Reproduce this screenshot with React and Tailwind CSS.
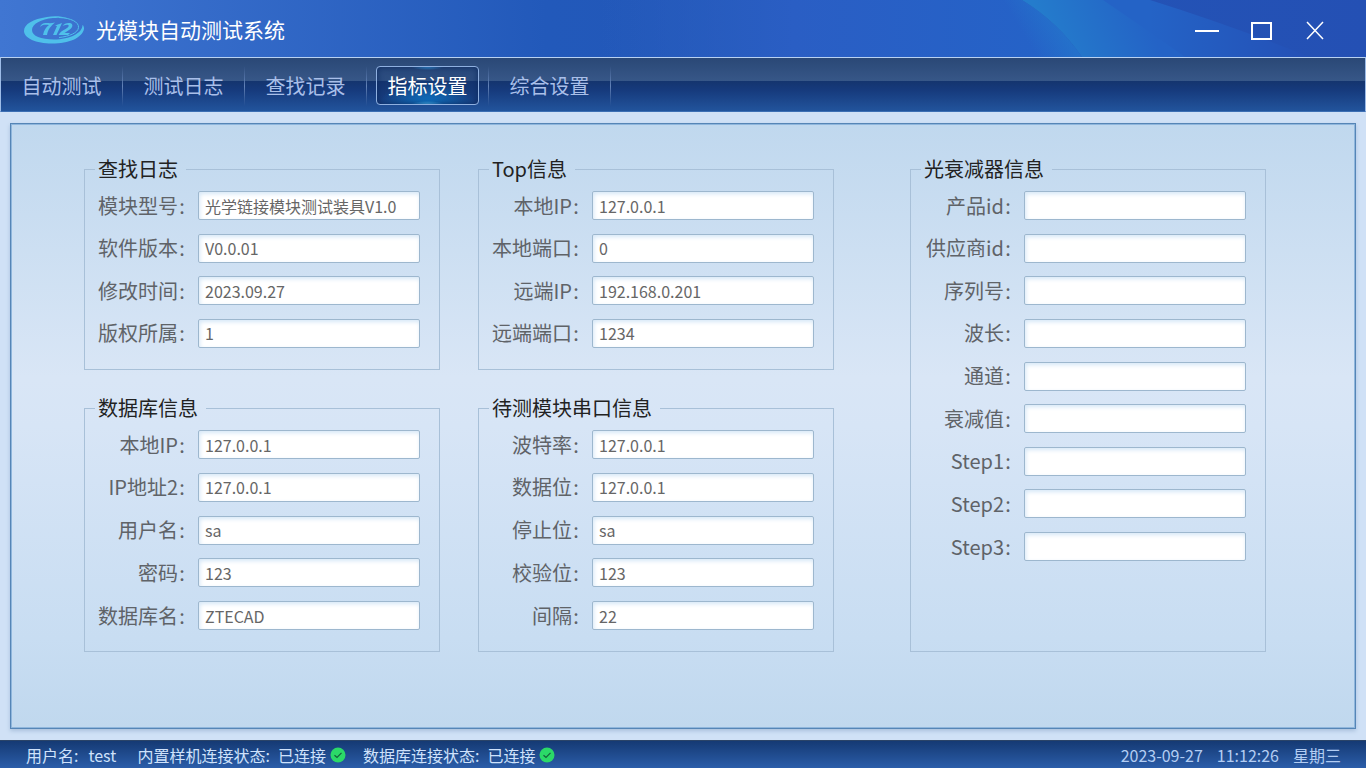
import { useId, useState } from 'react'

const TABS = ['自动测试', '测试日志', '查找记录', '指标设置', '综合设置']

const LOG = [
  ['模块型号', '光学链接模块测试装具V1.0'],
  ['软件版本', 'V0.0.01'],
  ['修改时间', '2023.09.27'],
  ['版权所属', '1'],
]

const DATABASE = [
  ['本地IP', '127.0.0.1'],
  ['IP地址2', '127.0.0.1'],
  ['用户名', 'sa'],
  ['密码', '123'],
  ['数据库名', 'ZTECAD'],
]

const TOP = [
  ['本地IP', '127.0.0.1'],
  ['本地端口', '0'],
  ['远端IP', '192.168.0.201'],
  ['远端端口', '1234'],
]

const SERIAL = [
  ['波特率', '127.0.0.1'],
  ['数据位', '127.0.0.1'],
  ['停止位', 'sa'],
  ['校验位', '123'],
  ['间隔', '22'],
]

const ATTENUATOR = [
  ['产品id', ''],
  ['供应商id', ''],
  ['序列号', ''],
  ['波长', ''],
  ['通道', ''],
  ['衰减值', ''],
  ['Step1', ''],
  ['Step2', ''],
  ['Step3', ''],
]

function Logo() {
  return (
    <svg viewBox="0 0 60 28" className="w-[60px] h-7 shrink-0" aria-hidden="true">
      <path
        fill="#4fc0ea"
        fillRule="evenodd"
        d="M43 2C37 0 29 0 23 1C9 3 0 8 0 15C0 22 12 27.5 28 27.5C45 27.5 58 22 60 13C60 11 59.5 9.500 58.5 9C58.5 17 46 23.5 30 23.5C17 23.5 8 20 8 14C8 8 17 3 29 2C36 1.500 40 1.500 43 2Z"
      />
      <path d="M35 1.5C47 2 55 6 54.5 11.5C54 17 45 20.5 35 21.500" fill="none" stroke="#4fc0ea" strokeWidth="1" />
      <path
        fill="#4fc0ea"
        d="M16 11C17 7.500 20 6.500 23 7C26 7.300 28 7.200 31 6.500C27 10 24 13 23 19H19C20 14 22 11 25 9C21 8.500 18 8.500 16 11Z"
      />
      <path fill="#4fc0ea" d="M31 9.500L38 7L32.500 19H29L33 10Z" />
      <path
        fill="#4fc0ea"
        d="M38.500 10C40 7.500 43 6.500 46 7C50 8 48.500 12 45 14L40.500 17H46L44 19H34.500C36 16 39 14.500 42 12.800C45 11 45.500 9 43.500 8.800C41.500 8.600 40 9.500 38.500 10Z"
      />
    </svg>
  )
}

function TitleBar() {
  return (
    <header className="relative h-[57px] flex items-center justify-between pl-6 pr-6 pt-0.5 overflow-hidden bg-linear-to-r from-[#4076d2] via-[#2259ba] via-40% to-[#2450b4]">
      <svg viewBox="0 0 1366 57" preserveAspectRatio="none" className="absolute inset-0 w-full h-full" aria-hidden="true">
        <defs>
          <linearGradient id="base" x1="0" x2="1" y1="0" y2="0">
            <stop offset="0" stopColor="#2b60c0" stopOpacity="0" />
            <stop offset="0.4" stopColor="#2a5ec4" />
            <stop offset="1" stopColor="#2463c8" />
          </linearGradient>
          <linearGradient id="edge" gradientUnits="userSpaceOnUse" x1="1028" y1="42" x2="1058" y2="24">
            <stop offset="0" stopColor="#2479cc" stopOpacity="0" />
            <stop offset="1" stopColor="#2479cc" stopOpacity="0.6" />
          </linearGradient>
          <linearGradient id="glow" gradientUnits="userSpaceOnUse" x1="1048" y1="38" x2="1140" y2="0">
            <stop offset="0" stopColor="#247ccc" />
            <stop offset="1" stopColor="#2463c6" />
          </linearGradient>
          <linearGradient id="tail" gradientUnits="userSpaceOnUse" x1="1150" y1="0" x2="1310" y2="0">
            <stop offset="0" stopColor="#2463c6" />
            <stop offset="1" stopColor="#2450b6" />
          </linearGradient>
        </defs>
        <path d="M600 0H1022Q1058 22 1082 57H600Z" fill="url(#base)" />
        <path d="M980 0H1022Q1058 22 1082 57H980Z" fill="url(#edge)" />
        <path d="M1150 0Q1230 25 1310 57H1140L1100 0Z" fill="url(#tail)" />
        <path d="M1022 0H1103Q1140 25 1185 57H1082Q1058 22 1022 0Z" fill="url(#glow)" />
      </svg>
      <div className="relative flex items-center gap-3">
        <Logo />
        <h1 className="text-[21px] leading-7 pb-0.5 text-white">光模块自动测试系统</h1>
      </div>
      <div className="relative flex items-center text-white">
        <button type="button" aria-label="最小化" className="w-[54px] h-8 flex items-center justify-center">
          <svg width="24" height="20" fill="none" stroke="currentColor" strokeWidth="2"><path d="M0 11H24" /></svg>
        </button>
        <button type="button" aria-label="最大化" className="w-[54px] h-8 flex items-center justify-center">
          <svg width="22" height="20" fill="none" stroke="currentColor" strokeWidth="2"><path d="M2 3H21V19H2Z" /></svg>
        </button>
        <button type="button" aria-label="关闭" className="w-[54px] h-8 flex items-center justify-center">
          <svg width="20" height="20" fill="none" stroke="currentColor" strokeWidth="1.500"><path d="M2 2L18 19M18 2L2 19" /></svg>
        </button>
      </div>
    </header>
  )
}

function NavBar({ active, onChange }) {
  return (
    <nav className="h-[55px] flex items-center pt-0.5 border border-t-[#b9d2f2] border-x-[#9dbce8] border-b-[#3d6fb4] bg-[linear-gradient(to_bottom,#2a4876_0%,#375788_44%,#14356f_44%,#163a7c_60%,#22549c_100%)]">
      {TABS.map((tab) => (
        <div key={tab} className="flex items-center">
          <div className="w-[121px] flex justify-center">
            <button
              type="button"
              onClick={() => onChange(tab)}
              className={`w-[103px] h-[39px] rounded text-xl leading-none ${
                tab === active
                  ? 'border border-[#8fb0e0] text-white shadow-[inset_0_0_6px_#0c2a60] bg-[radial-gradient(ellipse_16px_3px_at_50%_0%,#3aa6ee,transparent),radial-gradient(ellipse_16px_3px_at_50%_100%,#4cc4ff,transparent),radial-gradient(ellipse_48px_24px_at_50%_100%,#0f78c8,transparent),linear-gradient(to_bottom,#2a4a7c_0%,#2c4d80_37%,#14346e_37%,#183f82_100%)]'
                  : 'text-[#a9bfe9]'
              }`}
            >
              {tab}
            </button>
          </div>
          <span className="w-px h-10 bg-linear-to-b from-[#5f82bb]/0 via-[#6383b8] to-[#5f82bb]/0" />
        </div>
      ))}
    </nav>
  )
}

function Field({ label, value }) {
  const id = useId()
  return (
    <div className="flex items-center">
      <label htmlFor={id} className="w-[101px] mr-3 shrink-0 flex justify-end text-xl leading-7 text-[#5f6368]">
        {label}
        <span className="w-2 text-center">:</span>
      </label>
      <input
        id={id}
        type="text"
        defaultValue={value}
        className="flex-1 min-w-0 h-[29px] px-1.5 rounded-xs border border-[#9db7ce] bg-white text-base leading-6 text-[#666] shadow-[inset_1px_2px_4px_#d5e7f7] outline-none"
      />
    </div>
  )
}

function Group({ title, fields, height }) {
  return (
    <fieldset className="w-full min-w-0 border border-[#a8c0d8] pt-3 pb-[21px] pr-[19px]">
      <legend className="ml-2.5 pl-[3px] pr-2 text-xl leading-5 text-[#222]">{title}</legend>
      <div className={`flex flex-col justify-between ${height}`}>
        {fields.map(([label, value]) => (
          <Field key={label} label={label} value={value} />
        ))}
      </div>
    </fieldset>
  )
}

function Connected() {
  return (
    <svg viewBox="0 0 16 16" className="w-4 h-4 ml-1" aria-hidden="true">
      <circle cx="8" cy="8" r="7.5" fill="#2bd968" />
      <path d="M4.500 8.200L7 10.500L11.500 5.800" fill="none" stroke="#14603c" strokeWidth="1.200" />
    </svg>
  )
}

function StatusBar() {
  return (
    <footer className="h-7 flex items-center justify-between pl-[26px] pr-[25px] text-base leading-6 text-[#cfe2fb] border-t border-[#2b4468] bg-linear-to-b from-[#153a74] to-[#2b5da9]">
      <div className="flex items-center gap-[17px]">
        <span className="flex gap-2.5">用户名: <span className="w-8">test</span></span>
        <span className="flex items-center gap-2">
          <span>内置样机连接状态:</span>
          <span className="flex items-center">已连接<Connected /></span>
        </span>
        <span className="flex items-center gap-2">
          <span>数据库连接状态:</span>
          <span className="flex items-center">已连接<Connected /></span>
        </span>
      </div>
      <div className="flex gap-3.5 text-[#b3cdf3]">
        <span>2023-09-27</span>
        <span>11:12:26</span>
        <span>星期三</span>
      </div>
    </footer>
  )
}

export default function App() {
  const [active, setActive] = useState('指标设置')

  return (
    <div className="min-h-screen flex flex-col bg-[#d0e1f6] font-['Noto_Sans_CJK_SC',sans-serif]">
      <TitleBar />
      <NavBar active={active} onChange={setActive} />

      <main className="flex-1 mx-2.5 my-[11px] border border-[#5585b6] shadow-[inset_0_0_0_1px_#8fb6dc,0_2px_4px_#a9c0dc] pt-[35px] pb-8 pl-[73px] pr-[89px] bg-[linear-gradient(to_bottom,#c0d8ee_0%,#d9e6f6_42%,#d7e5f6_50%,#c8ddf2_85%,#c0d8ee_100%)]">
        <div className="flex">
          <div className="flex-1 min-w-0 flex flex-col gap-7">
            <Group title="查找日志" fields={LOG} height="h-[157px]" />
            <Group title="数据库信息" fields={DATABASE} height="h-[200px]" />
          </div>
          <div className="flex-1 min-w-0 ml-[38px] flex flex-col gap-7">
            <Group title="Top信息" fields={TOP} height="h-[157px]" />
            <Group title="待测模块串口信息" fields={SERIAL} height="h-[200px]" />
          </div>
          <div className="flex-1 min-w-0 ml-[76px] flex">
            <Group title="光衰减器信息" fields={ATTENUATOR} height="h-[370px]" />
          </div>
        </div>
      </main>

      <StatusBar />
    </div>
  )
}
